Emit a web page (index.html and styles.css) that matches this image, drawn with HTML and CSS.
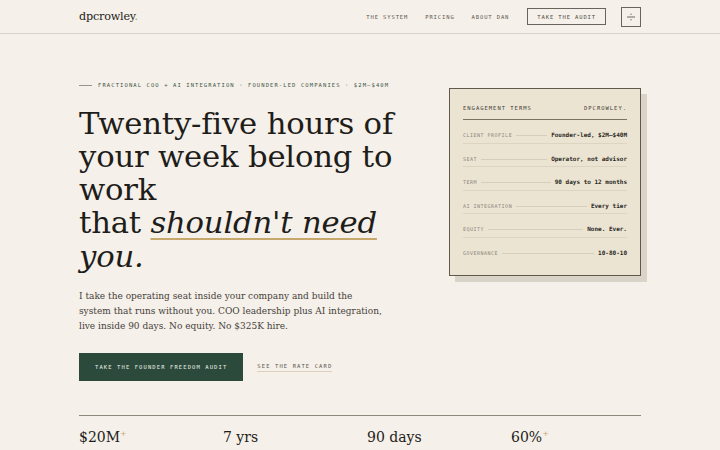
FILE: index.html
```html
<!DOCTYPE html>
<html>
<head>
<meta charset="utf-8">
<link rel="stylesheet" href="styles.css">
</head>
<body>
<header class="site-header">
  <div class="wrap header-inner">
    <a class="logo">dpcrowley<span class="dot">.</span></a>
    <nav class="nav">
      <a class="nav-link">THE SYSTEM</a>
      <a class="nav-link">PRICING</a>
      <a class="nav-link">ABOUT DAN</a>
      <a class="nav-cta">TAKE THE AUDIT</a>
      <button class="menu-btn" aria-label="Menu">
        <svg width="10" height="10" viewBox="0 0 10 10"><circle cx="5" cy="2.2" r="0.7" fill="#7d766b"/><line x1="1" y1="5" x2="9" y2="5" stroke="#6e675c" stroke-width="1"/><circle cx="5" cy="7.8" r="0.7" fill="#7d766b"/></svg>
      </button>
    </nav>
  </div>
</header>

<main class="wrap">
  <section class="hero">
    <div class="hero-copy">
      <p class="eyebrow"><span class="eyebrow-rule"></span>FRACTIONAL COO + AI INTEGRATION · FOUNDER-LED COMPANIES · $2M–$40M</p>
      <h1 class="headline">Twenty-five hours of your week belong to work<br>that <em class="accent"><span class="underlined">shouldn't need</span> you.</em></h1>
      <p class="lede">I take the operating seat inside your company and build the system that runs without you. COO leadership plus AI integration, live inside 90 days. No equity. No $325K hire.</p>
      <div class="actions">
        <a class="btn-primary">TAKE THE FOUNDER FREEDOM AUDIT</a>
        <a class="btn-link">SEE THE RATE CARD</a>
      </div>
    </div>
    <aside class="terms-card">
      <div class="card-head">
        <span>ENGAGEMENT TERMS</span>
        <span>DPCROWLEY.</span>
      </div>
      <div class="term"><span class="term-label">CLIENT PROFILE</span><span class="leader"></span><span class="term-value">Founder-led, $2M–$40M</span></div>
      <div class="term"><span class="term-label">SEAT</span><span class="leader"></span><span class="term-value">Operator, not advisor</span></div>
      <div class="term"><span class="term-label">TERM</span><span class="leader"></span><span class="term-value">90 days to 12 months</span></div>
      <div class="term"><span class="term-label">AI INTEGRATION</span><span class="leader"></span><span class="term-value">Every tier</span></div>
      <div class="term"><span class="term-label">EQUITY</span><span class="leader"></span><span class="term-value">None. Ever.</span></div>
      <div class="term last"><span class="term-label">GOVERNANCE</span><span class="leader"></span><span class="term-value">10-80-10</span></div>
    </aside>
  </section>

  <section class="stats">
    <div class="stat">$20M<sup class="plus">+</sup></div>
    <div class="stat">7 yrs</div>
    <div class="stat">90 days</div>
    <div class="stat">60%<sup class="plus">+</sup></div>
  </section>
</main>
</body>
</html>
```

FILE: styles.css
```css
* { box-sizing: border-box; }
html, body { margin: 0; padding: 0; }
body {
  background: #f5f0e9;
  color: #1e1d1a;
  font-family: "DejaVu Serif", serif;
  overflow: hidden;
}
.wrap { width: 562px; margin: 0 auto; }

.site-header { border-bottom: 1px solid #d8d2c8; height: 34px; }
.header-inner { display: flex; align-items: center; justify-content: space-between; height: 33px; }
.logo { font-family: "DejaVu Serif", serif; font-size: 11.2px; color: #1e1d1a; letter-spacing: -0.2px; }
.logo .dot { color: #b89a5e; }
.nav { display: flex; align-items: center; }
.nav-link, .nav-cta {
  font-family: "DejaVu Sans Mono", monospace;
  font-size: 5.5px;
  letter-spacing: 0.16em;
  color: #5d5850;
}
.nav-link { margin-right: 17px; }
.nav-link:nth-child(3) { margin-right: 18px; }
.nav-cta {
  border: 1px solid #6a655c;
  padding: 4.5px 9px;
  color: #4f4a42;
  margin-right: 15px;
}
.menu-btn {
  width: 20px; height: 20px;
  border: 1px solid #6a655c;
  background: transparent;
  padding: 0;
  display: flex; align-items: center; justify-content: center;
}

.hero { display: grid; grid-template-columns: 1fr 192px; column-gap: 40px; padding-top: 48px; align-items: start; }
.eyebrow {
  margin: 0;
  display: flex; align-items: center;
  font-family: "DejaVu Sans Mono", monospace;
  font-size: 5.5px;
  letter-spacing: 0.2em;
  color: #3d5547;
  white-space: nowrap;
}
.eyebrow-rule { width: 13px; height: 1px; background: #9a958c; margin-right: 6px; }
.headline {
  margin: 18.5px 0 0;
  font-weight: normal;
  font-size: 30.7px;
  line-height: 33.3px;
  letter-spacing: -0.2px;
  color: #1e1d1a;
}
.accent { font-style: italic; }
.underlined {
  text-decoration: underline;
  text-decoration-color: #c6a86d;
  text-decoration-thickness: 1.5px;
  text-underline-offset: 5px;
}
.lede {
  margin: 16.5px 0 0;
  font-size: 9px;
  line-height: 15px;
  color: #45413b;
  width: 308px;
}
.actions { display: flex; align-items: center; margin-top: 19px; }
.btn-primary {
  display: inline-block;
  background: #2b4a3c;
  color: #eef0e8;
  font-family: "DejaVu Sans Mono", monospace;
  font-size: 5.5px;
  letter-spacing: 0.2em;
  padding: 11px 16px;
  height: 28px;
  line-height: 6.5px;
}
.btn-link {
  margin-left: 14px;
  font-family: "DejaVu Sans Mono", monospace;
  font-size: 5.5px;
  letter-spacing: 0.2em;
  color: #5a564e;
  padding-bottom: 2px;
  border-bottom: 1px solid #ddd1bb;
}

.terms-card {
  margin-top: 6px;
  background: #ece4d3;
  border: 1px solid #5e584d;
  box-shadow: 6px 6px 0 #d9d3c8;
  padding: 16px 13px 14px;
  height: 188px;
}
.card-head {
  display: flex; justify-content: space-between;
  font-family: "DejaVu Sans Mono", monospace;
  font-size: 5.5px;
  letter-spacing: 0.18em;
  color: #3f3c35;
  padding-bottom: 8px;
  border-bottom: 1.5px solid #7a7364;
}
.term {
  display: flex; align-items: baseline;
  font-family: "DejaVu Sans Mono", monospace;
  height: 23.6px;
  padding-top: 11px;
  border-bottom: 1px solid #ddd4c2;
}
.term.last { border-bottom: none; }
.term-label { font-size: 5px; letter-spacing: 0.1em; color: #8a857b; white-space: nowrap; }
.leader { flex: 1; border-bottom: 1px solid #d6cdbb; margin: 0 4px; position: relative; top: -1px; }
.term-value { font-size: 6px; font-weight: bold; color: #2a2823; white-space: nowrap; }

.stats {
  margin-top: 34px;
  border-top: 1px solid #8d877c;
  display: grid;
  grid-template-columns: repeat(4, 1fr);
  column-gap: 14px;
  padding-top: 11px;
}
.stat { font-size: 14px; color: #1e1d1a; line-height: 20px; }
.plus { color: #c6a86d; font-size: 8px; vertical-align: 6px; line-height: 0; }
```
